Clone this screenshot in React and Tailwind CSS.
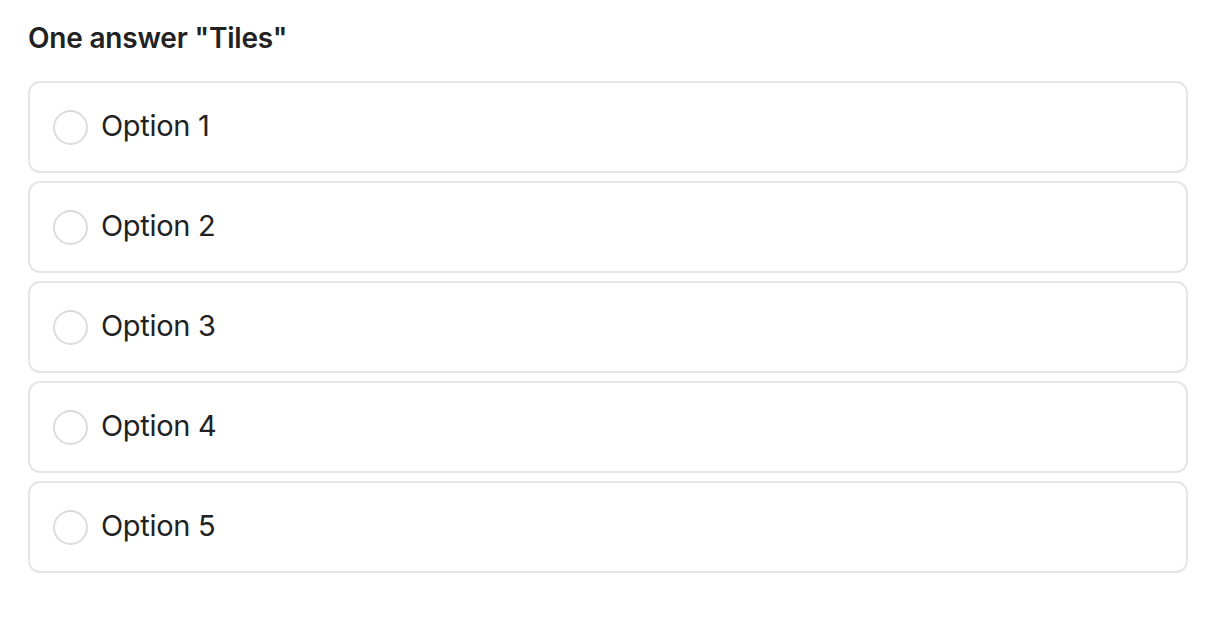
import React from 'react';

const options = ["Option 1", "Option 2", "Option 3", "Option 4", "Option 5"];

const App = () => {
  return (
    <div
      className="w-[1218px] h-[618px] bg-white px-[28px] pt-[19px] text-[#222]"
      style={{ fontFamily: "Inter, 'Noto Sans', sans-serif" }}
    >
      <h2 className="text-[28px] leading-[38px] font-semibold tracking-[-0.2px] mb-[24px]">
        One answer "Tiles"
      </h2>

      <div className="flex flex-col gap-[8px] w-[1160px]">
        {options.map((opt) => (
          <label
            key={opt}
            className="h-[92px] flex items-center border-2 border-[#e6e6e6] rounded-[12px] pl-[23px] cursor-pointer"
          >
            <span className="w-[35px] h-[35px] rounded-full border-2 border-[#dcdcdc] bg-white shrink-0"></span>
            <span className="ml-[13px] pb-[3px] text-[29px] leading-none tracking-[-0.3px]">{opt}</span>
          </label>
        ))}
      </div>
    </div>
  );
};

export default App;
